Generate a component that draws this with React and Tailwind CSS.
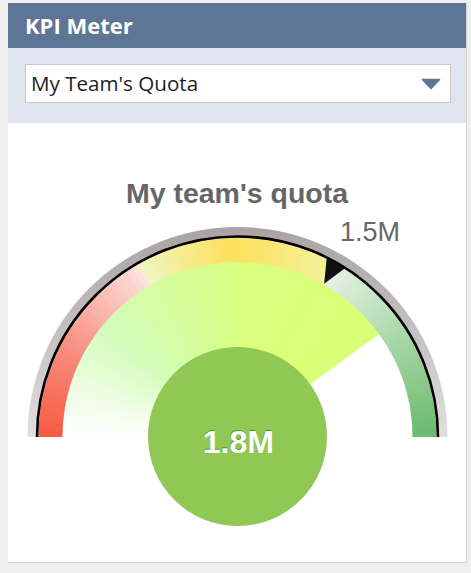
import React from "react";

const CX = 229.5;
const CY = 229;

function pt(r, deg) {
  const a = (deg * Math.PI) / 180;
  return [CX + r * Math.cos(a), CY - r * Math.sin(a)];
}

function ring(r1, r2, a1, a2) {
  const [x1, y1] = pt(r2, a1);
  const [x2, y2] = pt(r2, a2);
  const [x3, y3] = pt(r1, a2);
  const [x4, y4] = pt(r1, a1);
  return `M${x1} ${y1} A${r2} ${r2} 0 0 1 ${x2} ${y2} L${x3} ${y3} A${r1} ${r1} 0 0 0 ${x4} ${y4} Z`;
}

function wedge(r, a1, a2) {
  const [x1, y1] = pt(r, a1);
  const [x2, y2] = pt(r, a2);
  return `M${CX} ${CY} L${x1} ${y1} A${r} ${r} 0 0 1 ${x2} ${y2} Z`;
}

function hex(h) {
  return [parseInt(h.slice(1, 3), 16), parseInt(h.slice(3, 5), 16), parseInt(h.slice(5, 7), 16)];
}

function interp(stops, a) {
  for (let i = 0; i < stops.length - 1; i++) {
    const [a0, c0] = stops[i];
    const [a1, c1] = stops[i + 1];
    if (a <= a0 && a >= a1) {
      const t = (a0 - a) / (a0 - a1 || 1);
      const p = hex(c0);
      const q = hex(c1);
      const m = p.map((v, k) => Math.round(v + (q[k] - v) * t));
      return `rgb(${m[0]},${m[1]},${m[2]})`;
    }
  }
  return stops[stops.length - 1][1];
}

const bandSegments = [
  { from: 180, to: 120, stops: [[180, "#f65a43"], [155, "#f88878"], [125, "#fcd4cf"], [120, "#fde4e0"]] },
  { from: 120, to: 60, stops: [[120, "#eff6c2"], [92, "#fce05a"], [60, "#f3f29e"]] },
  { from: 60, to: 0, stops: [[60, "#e5f1e5"], [30, "#a6d6a4"], [0, "#6bb96e"]] },
];

const sectorStops = [
  [180, "#ffffff"],
  [165, "#f0fde6"],
  [140, "#d3fcb8"],
  [85, "#d8fe7c"],
  [36, "#d9ff78"],
];

function Gauge() {
  const bandPaths = [];
  bandSegments.forEach((seg, si) => {
    const step = 2;
    for (let a = seg.from; a > seg.to; a -= step) {
      const a2 = Math.max(a - step, seg.to);
      const mid = (a + a2) / 2;
      const ov = a2 === seg.to ? 0 : 0.4;
      bandPaths.push(
        <path key={`b${si}-${a}`} d={ring(175, 199, a, a2 - ov)} fill={interp(seg.stops, mid)} />
      );
    }
  });

  const sectorPaths = [];
  for (let a = 180; a > 36; a -= 1) {
    const a2 = Math.max(a - 1, 36);
    const ov = a2 === 36 ? 0 : 0.5;
    sectorPaths.push(
      <path key={`s${a}`} d={wedge(175.5, a, a2 - ov)} fill={interp(sectorStops, (a + a2) / 2)} />
    );
  }

  const tip = pt(176, 60.5);
  const b1 = pt(200, 63.5);
  const b2 = pt(200, 57.5);
  const [lx, ly] = pt(200.5, 180);
  const [rx, ry] = pt(200.5, 0);

  return (
    <svg width="458" height="354" viewBox="0 0 458 354" className="block">
      <defs>
        <linearGradient id="grayRing" x1="0" y1="19" x2="0" y2="229" gradientUnits="userSpaceOnUse">
          <stop offset="0" stopColor="#a9a3a3" />
          <stop offset="1" stopColor="#e3dfdf" />
        </linearGradient>
      </defs>
      <path d={ring(199, 210, 180, 0)} fill="url(#grayRing)" />
      {sectorPaths}
      {bandPaths}
      <path
        d={`M${lx} ${ly} A200.5 200.5 0 0 1 ${rx} ${ry}`}
        fill="none"
        stroke="#000"
        strokeWidth="2.6"
      />
      <path d={`M${b1[0]} ${b1[1]} L${b2[0]} ${b2[1]} L${tip[0]} ${tip[1]} Z`} fill="#111" />
      <text
        x="332"
        y="32.7"
        fontFamily="'Liberation Sans', Arial, sans-serif"
        fontSize="27"
        fill="#686868"
      >
        1.5M
      </text>
      <circle cx={CX} cy={CY - 0.5} r="89.5" fill="#8fc855" />
      <text
        x={CX + 0.5}
        y="244"
        textAnchor="middle"
        fontFamily="'Liberation Sans', Arial, sans-serif"
        fontWeight="bold"
        fontSize="32"
        fill="#3f8f22"
        opacity="0.85"
      >
        1.8M
      </text>
      <text
        x={CX + 0.8}
        y="245"
        textAnchor="middle"
        fontFamily="'Liberation Sans', Arial, sans-serif"
        fontWeight="bold"
        fontSize="32"
        fill="#ffffff"
      >
        1.8M
      </text>
    </svg>
  );
}

export default function App() {
  return (
    <div className="min-h-[573px] w-[471px] bg-[#efefef] pt-[3px] pl-[8px]">
      <div className="flex h-[560px] w-[459px] flex-col border-r border-b border-[#d4d4d4] bg-white">
        <div className="h-[45px] shrink-0 bg-[#5f7595] pl-[17px] pt-[11px]">
          <div className="font-['Open_Sans',sans-serif] text-[22px] font-bold leading-none text-white">
            KPI Meter
          </div>
        </div>
        <div className="h-[75px] shrink-0 bg-[#dfe5ee] pl-[17px] pt-[16px]">
          <div className="flex h-[39px] w-[426px] items-center justify-between border border-[#c9c9c9] bg-white pl-[5px] pr-[9px]">
            <span className="font-['Open_Sans',sans-serif] text-[20.6px] leading-[37px] text-[#222]">
              My Team's Quota
            </span>
            <svg width="20" height="12" viewBox="0 0 20 12">
              <path
                d="M1.5 1.5 H18.5 L10 10.5 Z"
                fill="#5d7597"
                stroke="#5d7597"
                strokeWidth="1.6"
                strokeLinejoin="round"
              />
            </svg>
          </div>
        </div>
        <div className="flex flex-1 flex-col items-center">
          <div className="mt-[56px] h-[29px] font-['Liberation_Sans',Arial,sans-serif] text-[28.5px] font-bold leading-[29px] text-[#666]">
            My team's quota
          </div>
          <Gauge />
        </div>
      </div>
    </div>
  );
}
